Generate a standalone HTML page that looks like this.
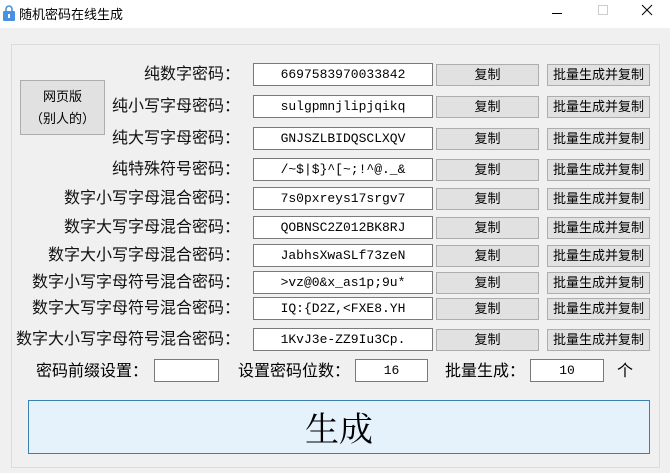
<!DOCTYPE html><html><head><meta charset="utf-8"><style>
*{box-sizing:border-box;margin:0;padding:0}
body{width:670px;height:473px;background:#f0f0f0;position:relative;overflow:hidden;font-family:"Liberation Sans","Noto Sans CJK SC",sans-serif;color:#000}
.tb{position:absolute;left:0;top:0;width:670px;height:28px;background:#fff}
.a{position:absolute}
.grp{left:11px;top:44px;width:649px;height:424px;border:1px solid #dcdcdc}
.lbl{font-size:16px;text-align:right;width:240px;left:0;line-height:23px;color:#111}
.fld{left:253px;width:180px;height:23px;background:#fff;border:1px solid #7a7a7a;font-family:"Liberation Mono","Noto Serif CJK SC",monospace;font-size:13px;text-align:center;line-height:21px}
.btn{background:#e1e1e1;border:1px solid #adadad;font-size:13px;text-align:center;line-height:20px;height:22px}
.b1{left:436px;width:103px}.b2{left:547px;width:103px}
</style></head><body>
<div class="tb"></div>
<svg class="a" style="left:3px;top:5px" width="12" height="16"><rect x="0" y="6" width="12" height="10" rx="1" fill="#4a90e2"/><path d="M3 7V4a3 3 0 0 1 6 0v3" stroke="#4a90e2" stroke-width="1.6" fill="none"/><rect x="5" y="9" width="2" height="4" fill="#fff"/></svg>
<div class="a" style="left:19px;top:4px;font-size:13px">随机密码在线生成</div>
<div class="a" style="left:552px;top:13px;width:10px;height:1px;background:#000"></div>
<div class="a" style="left:598px;top:5px;width:10px;height:10px;border:1px solid #ccc"></div>
<svg class="a" style="left:641px;top:4px" width="12" height="12"><path d="M1 1L11 11M11 1L1 11" stroke="#000" stroke-width="1"/></svg>
<div class="a grp"></div>
<div class="a btn" style="left:20px;top:80px;width:85px;height:55px;line-height:22px;padding-top:5px">网页版<br>（别人的）</div>

<div class="a lbl" style="top:63px">纯数字密码：</div><div class="a fld" style="top:63px">6697583970033842</div><div class="a btn b1" style="top:64px">复制</div><div class="a btn b2" style="top:64px">批量生成并复制</div>
<div class="a lbl" style="top:95px">纯小写字母密码：</div><div class="a fld" style="top:95px">sulgpmnjlipjqikq</div><div class="a btn b1" style="top:96px">复制</div><div class="a btn b2" style="top:96px">批量生成并复制</div>
<div class="a lbl" style="top:127px">纯大写字母密码：</div><div class="a fld" style="top:127px">GNJSZLBIDQSCLXQV</div><div class="a btn b1" style="top:128px">复制</div><div class="a btn b2" style="top:128px">批量生成并复制</div>
<div class="a lbl" style="top:158px">纯特殊符号密码：</div><div class="a fld" style="top:158px">/~$|$}^[~;!^@._&amp;</div><div class="a btn b1" style="top:159px">复制</div><div class="a btn b2" style="top:159px">批量生成并复制</div>
<div class="a lbl" style="top:187px">数字小写字母混合密码：</div><div class="a fld" style="top:187px">7s0pxreys17srgv7</div><div class="a btn b1" style="top:188px">复制</div><div class="a btn b2" style="top:188px">批量生成并复制</div>
<div class="a lbl" style="top:216px">数字大写字母混合密码：</div><div class="a fld" style="top:216px">QOBNSC2Z012BK8RJ</div><div class="a btn b1" style="top:217px">复制</div><div class="a btn b2" style="top:217px">批量生成并复制</div>
<div class="a lbl" style="top:244px">数字大小写字母混合密码：</div><div class="a fld" style="top:244px">JabhsXwaSLf73zeN</div><div class="a btn b1" style="top:245px">复制</div><div class="a btn b2" style="top:245px">批量生成并复制</div>
<div class="a lbl" style="top:271px">数字小写字母符号混合密码：</div><div class="a fld" style="top:271px">&gt;vz@0&amp;x_as1p;9u*</div><div class="a btn b1" style="top:272px">复制</div><div class="a btn b2" style="top:272px">批量生成并复制</div>
<div class="a lbl" style="top:297px">数字大写字母符号混合密码：</div><div class="a fld" style="top:297px">IQ:{D2Z,&lt;FXE8.YH</div><div class="a btn b1" style="top:298px">复制</div><div class="a btn b2" style="top:298px">批量生成并复制</div>
<div class="a lbl" style="top:328px">数字大小写字母符号混合密码：</div><div class="a fld" style="top:328px">1KvJ3e-ZZ9Iu3Cp.</div><div class="a btn b1" style="top:329px">复制</div><div class="a btn b2" style="top:329px">批量生成并复制</div>

<div class="a" style="left:36px;top:360px;font-size:16px;line-height:23px">密码前缀设置：</div>
<div class="a fld" style="left:154px;top:359px;width:65px"></div>
<div class="a" style="left:238px;top:360px;font-size:16px;line-height:23px">设置密码位数：</div>
<div class="a fld" style="left:355px;top:359px;width:73px">16</div>
<div class="a" style="left:445px;top:360px;font-size:16px;line-height:23px">批量生成：</div>
<div class="a fld" style="left:530px;top:359px;width:74px">10</div>
<div class="a" style="left:617px;top:360px;font-size:16px;line-height:23px">个</div>
<div class="a" style="left:28px;top:400px;width:622px;height:54px;background:#e5f1fb;border:1px solid #3c7fb1;font-size:34px;text-align:center;line-height:52px;font-family:'Noto Serif CJK SC',serif">生成</div>
</body></html>
